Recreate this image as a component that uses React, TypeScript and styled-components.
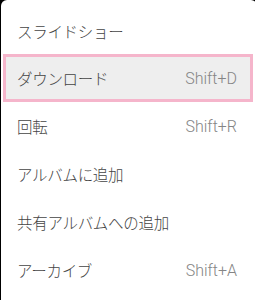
import React from "react";
import styled, { createGlobalStyle } from "styled-components";

const Global = createGlobalStyle`
  html, body { margin: 0; padding: 0; background: #000; overflow: hidden; }
  body { width: 255px; height: 300px; }
`;

const Menu = styled.div`
  margin-left: 1px;
  width: 256px;
  height: 300px;
  background: #fff;
  border-radius: 6px 6px 0 0;
  padding-top: 7px;
  box-sizing: border-box;
  font-family: Roboto, "Noto Sans CJK JP", sans-serif;
`;

const Item = styled.div<{ $active?: boolean }>`
  display: flex;
  align-items: center;
  justify-content: space-between;
  height: 48px;
  box-sizing: border-box;
  background: ${(p) => (p.$active ? "#eeeeee" : "transparent")};
  box-shadow: ${(p) => (p.$active ? "inset 0 0 0 3px #f5b5cb" : "none")};
  margin: ${(p) => (p.$active ? "-1px 4px 0 2px" : "0")};
  padding-left: ${(p) => (p.$active ? "14px" : "16px")};
  padding-right: ${(p) => (p.$active ? "16px" : "20px")};
`;

const Label = styled.span`
  font-family: "Noto Sans CJK JP", sans-serif;
  font-size: 15.5px;
  font-weight: 300;
  color: #444444;
  letter-spacing: -0.3px;
`;

const Shortcut = styled.span`
  font-family: Roboto, sans-serif;
  font-size: 16px;
  font-weight: 300;
  color: #858585;
`;

const items: { label: string; shortcut?: string; active?: boolean }[] = [
  { label: "スライドショー" },
  { label: "ダウンロード", shortcut: "Shift+D", active: true },
  { label: "回転", shortcut: "Shift+R" },
  { label: "アルバムに追加" },
  { label: "共有アルバムへの追加" },
  { label: "アーカイブ", shortcut: "Shift+A" },
];

export default function App() {
  return (
    <>
      <Global />
      <Menu>
        {items.map((it) => (
          <Item key={it.label} $active={it.active}>
            <Label>{it.label}</Label>
            {it.shortcut && <Shortcut>{it.shortcut}</Shortcut>}
          </Item>
        ))}
      </Menu>
    </>
  );
}
